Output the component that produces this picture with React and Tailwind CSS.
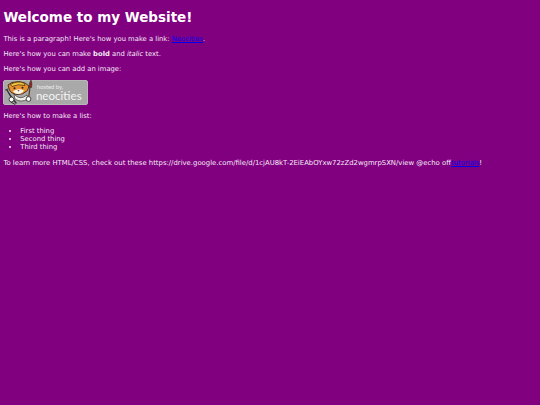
import React from 'react';

const CatBadge = () => (
    <div className="relative block w-[85px] h-[25px] rounded-[2px] bg-[#a9a9a9] border-[0.5px] border-[#b8b8b8]">
        {/* Cat mascot */}
        <svg className="absolute -left-[0.5px] -top-[0.5px] w-[33px] h-[26px] overflow-visible" viewBox="0 0 33 26" fill="none">
            {/* wrench arm */}
            <path d="M3 10 L6 15 L12 23" stroke="#333" strokeWidth="1.4" strokeLinecap="round" />
            <path d="M1.5 10 L4 9 M7 22 L11 24.5" stroke="#333" strokeWidth="1" strokeLinecap="round" />
            <circle cx="7.5" cy="19.5" r="2.4" fill="#fff" stroke="#222" strokeWidth="0.8" />
            {/* body */}
            <path d="M10 14 Q16 21 23 15 L24 19 Q17 23 11 19 Z" fill="#f4f0e8" stroke="#222" strokeWidth="0.6" />
            {/* head */}
            <path d="M4 5 L8 2.5 Q15 0.5 21 3 L25 6 L23.5 10.5 Q19 15 13 14.5 Q7 13.5 5.5 10 Z" fill="#e8912f" stroke="#2b1a0c" strokeWidth="0.8" />
            {/* helmet */}
            <path d="M6.5 4.5 Q13 0.5 20 3 L21 5.5 Q14 3.5 8 6.5 Z" fill="#f2c33c" stroke="#2b1a0c" strokeWidth="0.6" />
            {/* muzzle and eyes */}
            <path d="M9 11 Q15 8 20 10.5 Q18 14 14 14 Q10.5 14 9 11 Z" fill="#fbf3e4" />
            <circle cx="10.5" cy="8.3" r="1" fill="#222" />
            <circle cx="18.5" cy="7.8" r="1" fill="#222" />
            <path d="M13.5 10.3 L15.5 10.3 L14.5 11.5 Z" fill="#222" />
            {/* paint brush */}
            <path d="M24.5 19 L26 7" stroke="#5d3d2a" strokeWidth="1.3" />
            <path d="M25 7 Q25 3 27 0 Q28.5 3.5 27.5 7.5 Z" fill="#8f2b2b" stroke="#2b1a0c" strokeWidth="0.5" />
            <circle cx="24.5" cy="19" r="2.4" fill="#fff" stroke="#222" strokeWidth="0.8" />
        </svg>
        <span className="absolute left-[32.5px] top-[3.5px] text-[5.8px] leading-[6px] text-[#ececec] font-['Lato',sans-serif]">hosted by,</span>
        <span className="absolute left-[31.5px] top-[8.5px] text-[11.6px] leading-[13px] text-[#f4f4f4] font-['Lato',sans-serif]">neocities</span>
    </div>
);

export default function App() {
    return (
        <div className="min-h-[405px] bg-[#800080] p-[3.4px] text-[6.8px] leading-[8px] text-[#f6eaf6] font-['DejaVu_Sans',sans-serif]">
            <h1 className="mt-[5.6px] mb-[10.4px] text-[13.5px] leading-[16px] font-bold text-white">Welcome to my Website!</h1>
            <p className="my-[6.75px]">
                This is a paragraph! Here's how you make a link: <a href="#" className="text-[#0000ee] underline">Neocities</a>.
            </p>
            <p className="my-[6.75px]">
                Here's how you can make <strong>bold</strong> and <em>italic</em> text.
            </p>
            <p className="my-[6.75px]">Here's how you can add an image:</p>
            <CatBadge />
            <p className="mt-[7.5px] mb-[6.75px]">Here's how to make a list:</p>
            <ul className="my-[7.25px] pl-[16.9px] list-disc">
                <li>First thing</li>
                <li>Second thing</li>
                <li>Third thing</li>
            </ul>
            <p className="my-[6.75px] text-[6.88px]">
                To learn more HTML/CSS, check out these https://drive.google.com/file/d/1cjAU8kT-2EiEAbOYxw72zZd2wgmrpSXN/view @echo off<a href="#" className="text-[#0000ee] underline">tutorials</a>!
            </p>
        </div>
    );
}
